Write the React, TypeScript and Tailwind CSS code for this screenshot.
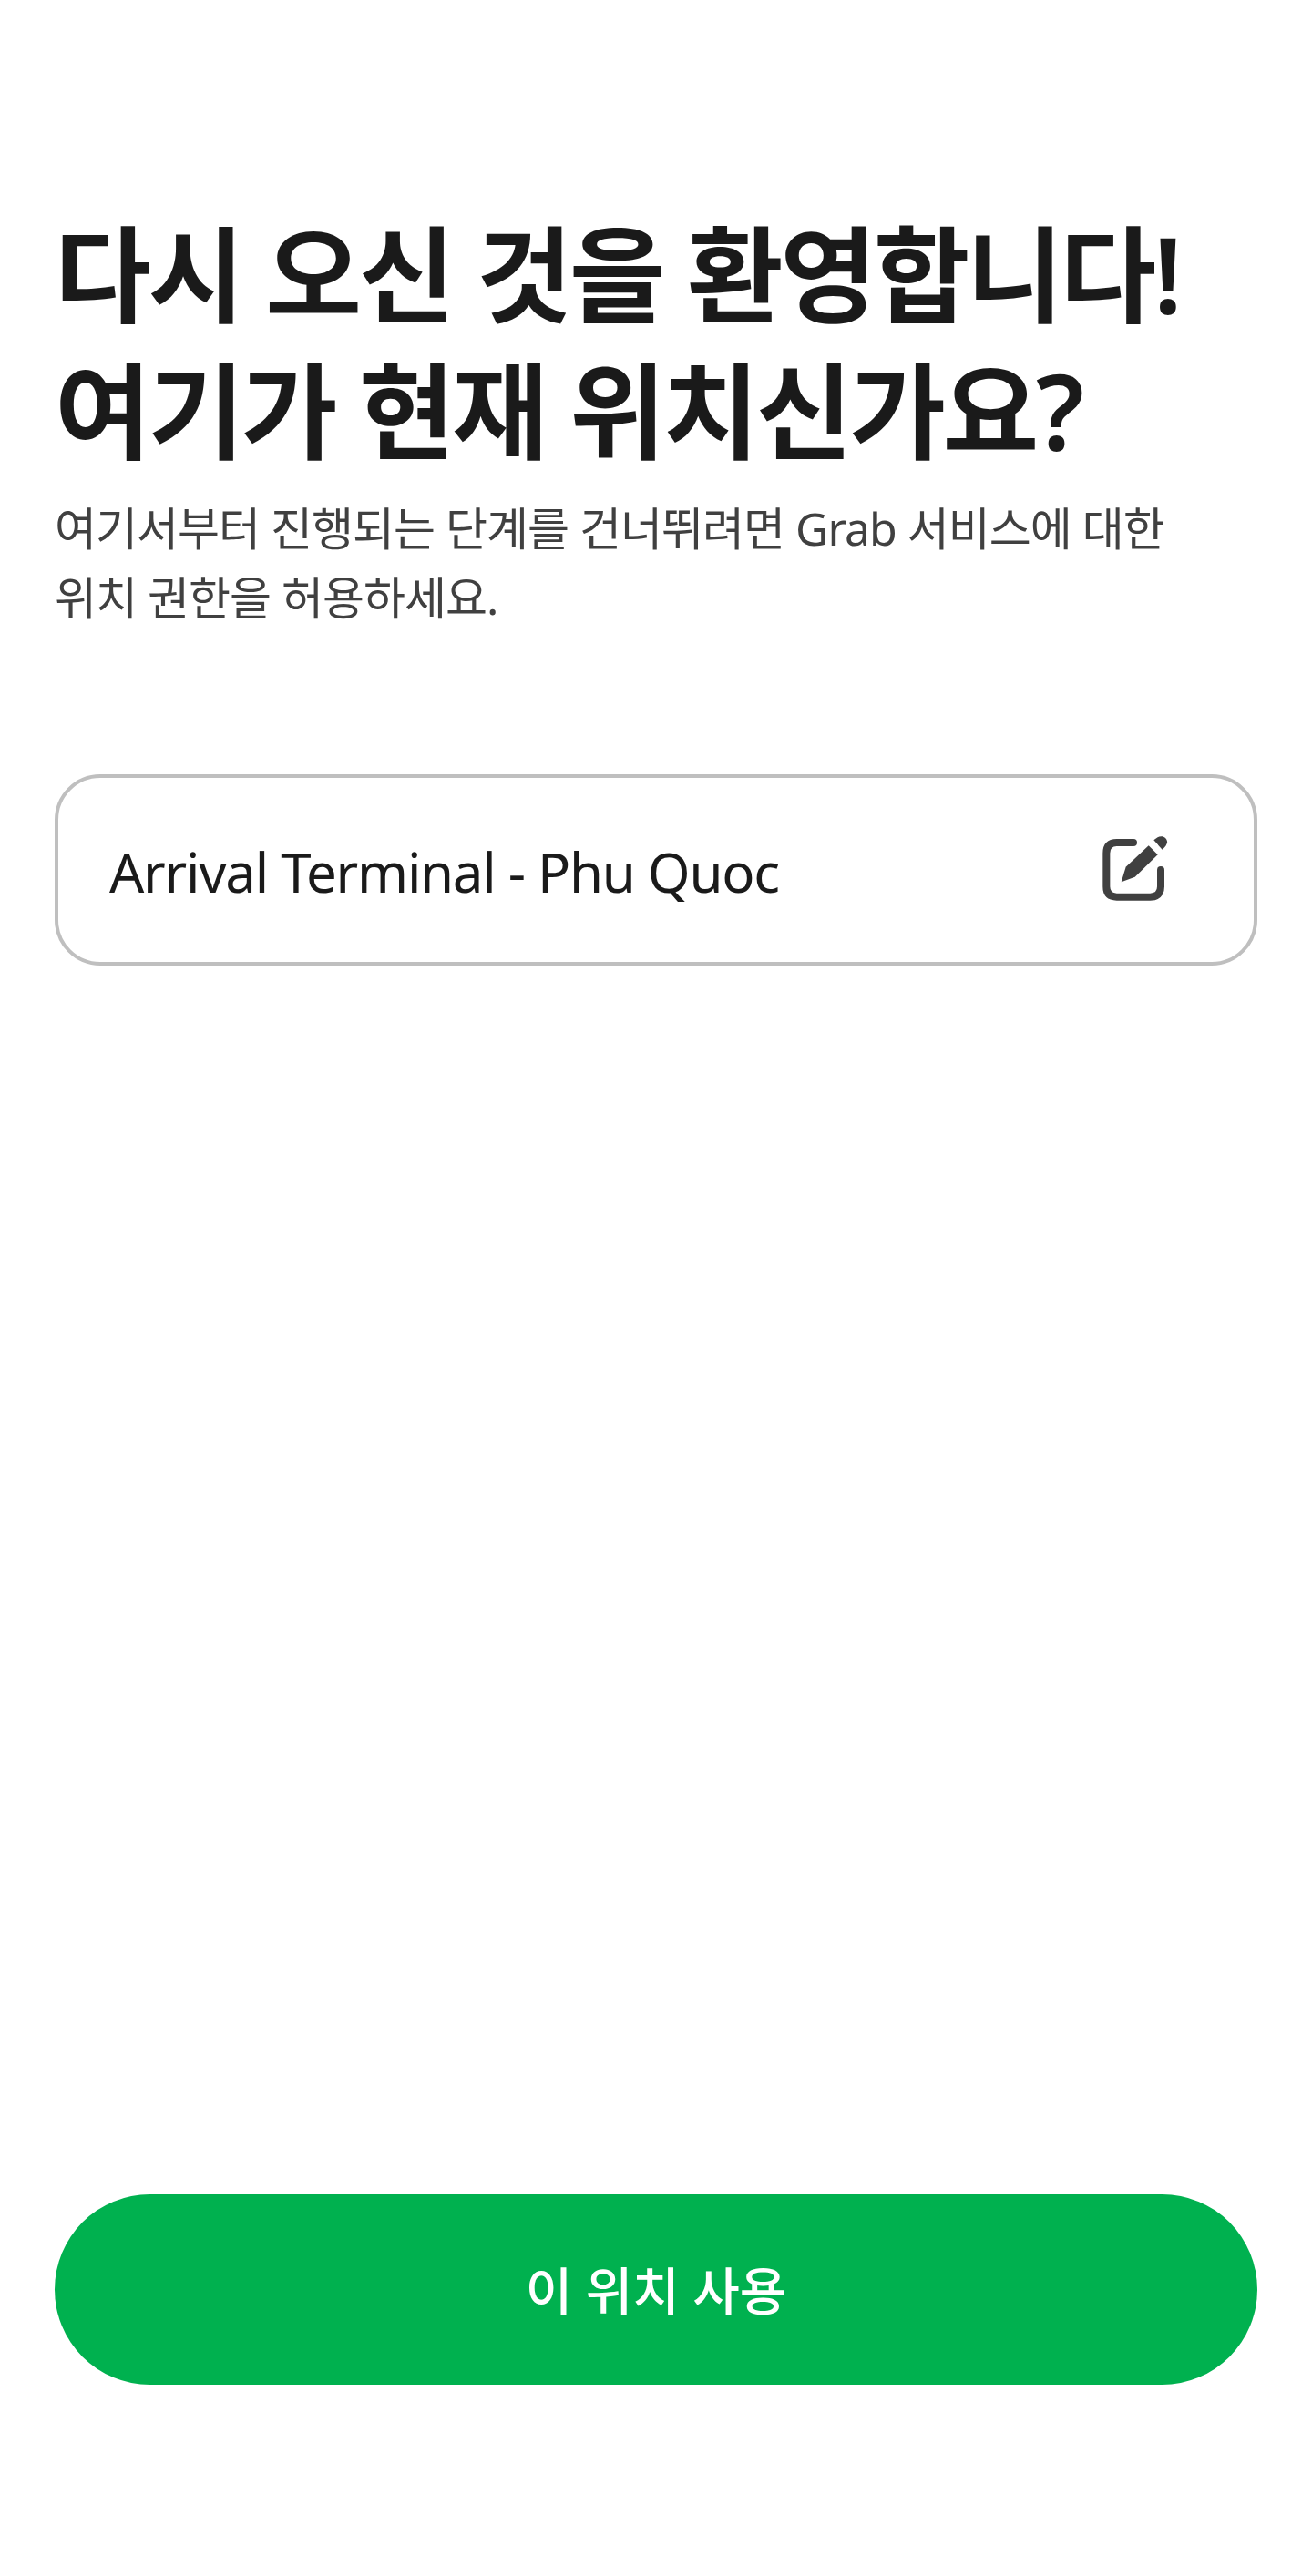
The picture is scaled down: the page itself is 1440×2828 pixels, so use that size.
export default function App() {
  return (
    <div className="flex h-[2828px] w-[1440px] flex-col bg-white px-[60px] pt-[226px] font-['Noto_Sans','Noto_Sans_CJK_KR',sans-serif]">
      <h1 className="text-[115px] font-semibold leading-[150px] tracking-[-3.4px] text-[#1a1a1a] whitespace-nowrap">
        다시 오신 것을 환영합니다!
        <br />
        여기가 현재 위치신가요?
      </h1>
      <p className="mt-[16px] text-[50px] font-normal leading-[76px] tracking-[-1px] text-[#404040] whitespace-nowrap">
        여기서부터 진행되는 단계를 건너뛰려면 Grab 서비스에 대한
        <br />
        위치 권한을 허용하세요.
      </p>
      <div className="mt-[156px] flex h-[210px] items-center justify-between rounded-[50px] border-4 border-[#bfbfbf] pl-[56px] pr-[92px]">
        <span className="mt-[3px] text-[60px] font-normal tracking-[-1.3px] text-[#1a1a1a]">Arrival Terminal - Phu Quoc</span>
        <svg width="75" height="75" viewBox="90 75 225 225" fill="none" className="-mt-[6px]">
          <path d="M195 105H140Q106 105 106 140V250Q106 284 140 284H250Q285 284 285 250V195" stroke="#404040" strokeWidth="24" strokeLinecap="round" />
          <path d="M245 115L275 145L200 218L155 235L170 185Z" fill="#404040" />
          <path d="M262 97C275 85 290 80 300 90C312 102 305 115 290 128Z" fill="#404040" />
        </svg>
      </div>
      <button className="mt-auto mb-[210px] h-[209px] rounded-full bg-[#00b14f] text-[56px] font-medium text-white">
        이 위치 사용
      </button>
    </div>
  );
}
